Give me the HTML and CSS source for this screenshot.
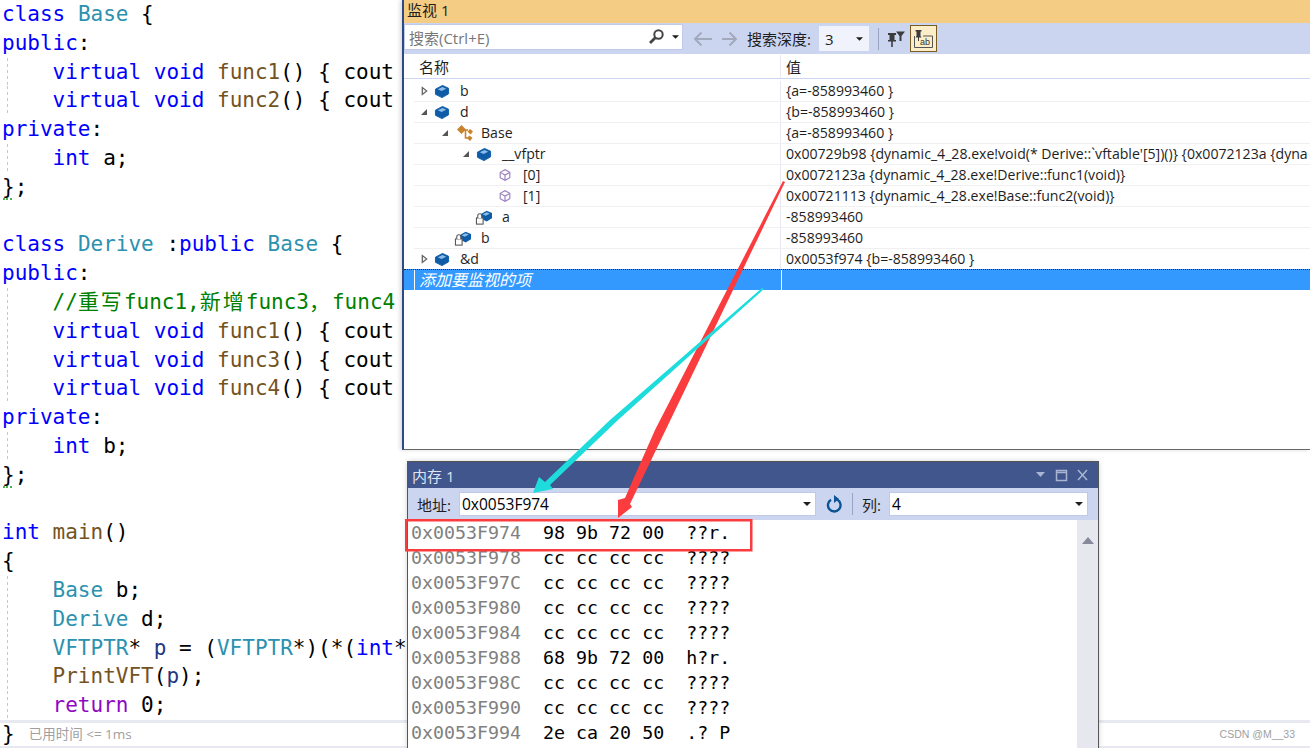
FILE: index.html
```html
<!DOCTYPE html>
<html lang="en">
<head>
  <meta charset="UTF-8" />
  <title>Watch and memory windows</title>
  <link rel="stylesheet" href="styles.css">
</head>
<body>
  <svg class="defs" width="0" height="0">
    <symbol id="cube" viewBox="0 0 16 16">
      <path d="M1 5.500 8.500 1.500 15 4.500v6L8 14.500 1 11z" fill="#0e5ca8" stroke="#0e5ca8" stroke-linejoin="round"/>
      <path d="M3.500 5.600 8.500 3.200l4 1.800-5 2.500z" fill="#8dbce6"/>
    </symbol>
    <symbol id="field" viewBox="0 0 16 16">
      <path d="M2.500 5 8 2l5.500 3v6L8 14l-5.500-3z" fill="none" stroke="#9a7fc0" stroke-width="1.300"/>
      <path d="M2.500 5 8 8l5.500-3M8 8v6" fill="none" stroke="#9a7fc0" stroke-width="1.300"/>
    </symbol>
    <symbol id="locked" viewBox="0 0 20 18">
      <path d="M6 6 13 2l6 2.500v6L13 14l-6-3z" fill="#0e5ca8"/>
      <path d="M8.500 6 13 3.600l3.500 1.500-4.500 2.500z" fill="#8dbce6"/>
      <rect x="1.500" y="10" width="7.500" height="7" fill="#fff" stroke="#555" stroke-width="1.200"/>
      <path d="M3 10V7.500a2.200 2.200 0 0 1 4.500 0V10" fill="#fff" stroke="#555" stroke-width="1.200"/>
    </symbol>
    <symbol id="base" viewBox="0 0 18 18">
      <path d="M1 5.500 5.500 1 10 5.500 5.500 10zM11.500 7.500l2.500-2.500 3 2.500-2.500 3zM11 14l2.500-2.500 3 2.500-2.500 3z" fill="#c9822d"/>
      <path d="M6 6h6M9.500 6.500V14h3" fill="none" stroke="#c9822d" stroke-width="1.600"/>
    </symbol>
    <symbol id="open" viewBox="0 0 8 8"><path d="M7 1v6H1z" fill="#555"/></symbol>
    <symbol id="closed" viewBox="0 0 8 10"><path d="M1.500 1v8L6.500 5z" fill="#fff" stroke="#666" stroke-width="1.500"/></symbol>
    <symbol id="caret" viewBox="0 0 8 4"><path d="M0 0h8L4 4z" fill="#1e1e1e"/></symbol>
  </svg>

  <main class="editor">
    <div class="ln"><b>class</b> <i>Base</i> {</div>
    <div class="ln"><b>public</b>:</div>
    <div class="ln guide">    <b>virtual</b> <b>void</b> <u>func1</u>() { cout</div>
    <div class="ln guide">    <b>virtual</b> <b>void</b> <u>func2</u>() { cout</div>
    <div class="ln"><b>private</b>:</div>
    <div class="ln guide">    <b>int</b> a;</div>
    <div class="ln squiggle">};</div>
    <div class="ln"> </div>
    <div class="ln"><b>class</b> <i>Derive</i> :<b>public</b> <i>Base</i> {</div>
    <div class="ln"><b>public</b>:</div>
    <div class="ln guide">    <em>//<span class="cjk">重写</span>func1,<span class="cjk">新增</span>func3<span class="cjk">，</span>func4</em></div>
    <div class="ln guide">    <b>virtual</b> <b>void</b> <u>func1</u>() { cout</div>
    <div class="ln guide">    <b>virtual</b> <b>void</b> <u>func3</u>() { cout</div>
    <div class="ln guide">    <b>virtual</b> <b>void</b> <u>func4</u>() { cout</div>
    <div class="ln"><b>private</b>:</div>
    <div class="ln guide">    <b>int</b> b;</div>
    <div class="ln squiggle">};</div>
    <div class="ln"> </div>
    <div class="ln"><b>int</b> <u>main</u>()</div>
    <div class="ln">{</div>
    <div class="ln guide">    <i>Base</i> b;</div>
    <div class="ln guide">    <i>Derive</i> d;</div>
    <div class="ln guide">    <i>VFTPTR</i>* <var>p</var> = (<i>VFTPTR</i>*)(*(<b>int</b>*</div>
    <div class="ln guide">    <u>PrintVFT</u>(<var>p</var>);</div>
    <div class="ln guide">    <s>return</s> 0;</div>
    <div class="ln status-row">}<span class="elapsed">已用时间 &lt;= 1ms</span><span class="credit">CSDN @M__33</span></div>
  </main>

  <section class="watch">
    <header class="watch-title">监视 1</header>
    <div class="watch-tools">
      <div class="search">
        <span>搜索(Ctrl+E)</span>
        <svg class="search-icon" width="17" height="16" viewBox="0 0 17 16"><circle cx="10.500" cy="5.500" r="4.200" fill="none" stroke="#444" stroke-width="2"/><path d="M7.500 8.500 2 14" stroke="#444" stroke-width="2.800"/></svg>
        <svg class="caret-s" width="7" height="4"><use href="#caret"/></svg>
      </div>
      <svg class="nav" width="44" height="16" viewBox="0 0 44 16"><path d="M19 8H2M8.500 1.500 2 8l6.500 6.500M29 8h14M36.500 1.500 43 8l-6.500 6.500" fill="none" stroke="#a3a9bd" stroke-width="2"/></svg>
      <span class="depth-label">搜索深度:</span>
      <div class="depth"><span>3</span><svg width="7" height="4"><use href="#caret"/></svg></div>
      <span class="sep"></span>
      <svg class="pin" width="18" height="18" viewBox="0 0 18 18"><path d="M9 1.500h9l-3.500 4.500v5h-2V6z" fill="#3c3c3c"/><path d="M1 3h8v2H7.500v5H9v1.500H1V10h1.500V5H1zM4.200 11.500h1.600V17H4.200z" fill="#3c3c3c"/></svg>
      <div class="ab-toggle"><svg width="21" height="21" viewBox="0 0 21 21"><path d="M2.500 2h6v1.500h-1V8l1 1.500h-6L3.500 8V3.500h-1zM5 9.500h1V13H5z" fill="#3c3c3c"/><path d="M1.500 8v11.500h18V8H10" fill="none" stroke="#555"/><text x="7" y="17" class="ab">ab</text></svg></div>
    </div>
    <div class="grid-head">
      <div class="name-col">名称</div>
      <div class="value-col">值</div>
    </div>
    <div class="rows">
      <div class="row">
        <div class="name-col"><span class="twist"><svg width="7" height="10"><use href="#closed"/></svg></span><svg class="ico" width="15" height="15"><use href="#cube"/></svg><span>b</span></div>
        <div class="value-col">{a=-858993460 }</div>
      </div>
      <div class="row">
        <div class="name-col"><span class="twist"><svg width="8" height="8"><use href="#open"/></svg></span><svg class="ico" width="15" height="15"><use href="#cube"/></svg><span>d</span></div>
        <div class="value-col">{b=-858993460 }</div>
      </div>
      <div class="row d1">
        <div class="name-col"><span class="twist"><svg width="8" height="8"><use href="#open"/></svg></span><svg class="ico ico-base" width="18" height="18"><use href="#base"/></svg><span>Base</span></div>
        <div class="value-col">{a=-858993460 }</div>
      </div>
      <div class="row d2">
        <div class="name-col"><span class="twist"><svg width="8" height="8"><use href="#open"/></svg></span><svg class="ico" width="15" height="15"><use href="#cube"/></svg><span>__vfptr</span></div>
        <div class="value-col">0x00729b98 {dynamic_4_28.exe!void(* Derive::`vftable'[5])()} {0x0072123a {dyna</div>
      </div>
      <div class="row d3">
        <div class="name-col"><span class="twist"></span><svg class="ico" width="14" height="14"><use href="#field"/></svg><span>[0]</span></div>
        <div class="value-col">0x0072123a {dynamic_4_28.exe!Derive::func1(void)}</div>
      </div>
      <div class="row d3">
        <div class="name-col"><span class="twist"></span><svg class="ico" width="14" height="14"><use href="#field"/></svg><span>[1]</span></div>
        <div class="value-col">0x00721113 {dynamic_4_28.exe!Base::func2(void)}</div>
      </div>
      <div class="row d2">
        <div class="name-col"><span class="twist"></span><svg class="ico" width="17" height="16"><use href="#locked"/></svg><span>a</span></div>
        <div class="value-col">-858993460</div>
      </div>
      <div class="row d1">
        <div class="name-col"><span class="twist"></span><svg class="ico" width="17" height="16"><use href="#locked"/></svg><span>b</span></div>
        <div class="value-col">-858993460</div>
      </div>
      <div class="row">
        <div class="name-col"><span class="twist"><svg width="7" height="10"><use href="#closed"/></svg></span><svg class="ico" width="15" height="15"><use href="#cube"/></svg><span>&amp;d</span></div>
        <div class="value-col">0x0053f974 {b=-858993460 }</div>
      </div>
      <div class="row add-row">
        <div class="name-col">添加要监视的项</div>
        <div class="value-col"></div>
      </div>
    </div>
  </section>

  <section class="memory">
    <header class="memory-title">
      <span>内存 1</span>
      <svg width="52" height="14" viewBox="0 0 52 14"><path d="M0 4h9L4.500 9z" fill="#a9b5d3"/><path d="M20.500 2.500h10v10h-10zM20.500 4.500h10" fill="none" stroke="#a9b5d3" stroke-width="1.500"/><path d="M42 2l9 10M51 2l-9 10" stroke="#a9b5d3" stroke-width="1.500"/></svg>
    </header>
    <div class="memory-tools">
      <span class="tool-label">地址:</span>
      <div class="combo addr"><span>0x0053F974</span><svg width="8" height="4"><use href="#caret"/></svg></div>
      <svg class="refresh" width="18" height="20" viewBox="0 0 18 20"><path d="M6 5.800a6.300 6.300 0 1 0 6.500 0" fill="none" stroke="#0b5394" stroke-width="2.400"/><path d="M9 1v8l5-4z" fill="#0b5394"/></svg>
      <span class="sep"></span>
      <span class="tool-label">列:</span>
      <div class="combo cols"><span>4</span><svg width="8" height="4"><use href="#caret"/></svg></div>
    </div>
    <div class="memory-body">
      <div class="dump">
        <div class="dump-line"><span class="addr-text">0x0053F974</span>  98 9b 72 00  ??r.</div>
        <div class="dump-line"><span class="addr-text">0x0053F978</span>  cc cc cc cc  ????</div>
        <div class="dump-line"><span class="addr-text">0x0053F97C</span>  cc cc cc cc  ????</div>
        <div class="dump-line"><span class="addr-text">0x0053F980</span>  cc cc cc cc  ????</div>
        <div class="dump-line"><span class="addr-text">0x0053F984</span>  cc cc cc cc  ????</div>
        <div class="dump-line"><span class="addr-text">0x0053F988</span>  68 9b 72 00  h?r.</div>
        <div class="dump-line"><span class="addr-text">0x0053F98C</span>  cc cc cc cc  ????</div>
        <div class="dump-line"><span class="addr-text">0x0053F990</span>  cc cc cc cc  ????</div>
        <div class="dump-line"><span class="addr-text">0x0053F994</span>  2e ca 20 50  .? P</div>
      </div>
      <div class="scrollbar"><svg width="12" height="7"><path d="M0 7 6 0l6 7z" fill="#868999"/></svg></div>
    </div>
  </section>

  <!-- hand drawn markup on top of the screenshot -->
  <svg class="markup" width="1310" height="748" viewBox="0 0 1310 748">
    <path d="M783 181 655 430 625 498 618 500 618 518 632 507 630 504 785 182z" fill="#fb3c3f"/>
    <path d="M762 288 610 420 545 482 539 477 533 493 553 489 550 485 618 420 764 289z" fill="#1fdcdc"/>
    <rect x="406.250" y="520.250" width="345" height="30" fill="none" stroke="#fb3c3f" stroke-width="2.500"/>
  </svg>
</body>
</html>
```
FILE: styles.css
```css
html, body {
  margin: 0;
  height: 748px;
  overflow: hidden;
  background-color: #fff;
}

.defs {
  position: absolute;
}

/* code editor */
.editor {
  font-family: "DejaVu Sans Mono", "Noto Sans CJK SC", monospace;
  font-size: 21px;
  color: #000;
}

.ln {
  position: relative;
  height: 28.8px;
  line-height: 28.8px;
  padding-left: 2px;
  white-space: pre;
}

.ln b {
  font-weight: normal;
  color: #0000ff;
}

.ln i {
  font-style: normal;
  color: #2b91af;
}

.ln u {
  text-decoration: none;
  color: #74531f;
}

.ln em {
  font-style: normal;
  color: #008000;
}

.ln s {
  text-decoration: none;
  color: #8f08c4;
}

.ln var {
  font-style: normal;
  color: #1f377f;
}

.cjk {
  letter-spacing: 2px;
}

.guide {
  background-image: linear-gradient(#c8c8c8 50%, transparent 50%);
  background-size: 1px 6px;
  background-position: 7px 0;
  background-repeat: repeat-y;
}

.squiggle::after {
  content: "";
  position: absolute;
  left: 3px;
  top: 23px;
  width: 9px;
  height: 2px;
  border-bottom: 2px dotted #4caf50;
}

.status-row {
  display: flex;
  align-items: center;
  height: 23px;
  line-height: 23px;
  border-top: 3px solid #e8e8f0;
  border-bottom: 3px solid #e8e8f0;
}

.elapsed {
  margin-left: 14px;
  font-family: "Open Sans", "Noto Sans CJK SC", sans-serif;
  font-size: 13.500px;
  color: #a0a0a0;
}

.credit {
  margin-left: auto;
  margin-right: 15px;
  font-family: "Liberation Sans", sans-serif;
  font-size: 10.500px;
  color: #a0a0a0;
}

/* watch window */
.watch {
  position: absolute;
  left: 402px;
  top: 0;
  width: 906px;
  height: 449px;
  background-color: #fff;
  border-left: 2px solid #2c4a85;
  border-bottom: 1px solid #666;
  box-shadow: -2px 0 4px rgba(0, 0, 0, 0.15);
  font-family: "Open Sans", "Noto Sans CJK SC", sans-serif;
  font-size: 14.100px;
  color: #1e1e1e;
}

.watch-title {
  height: 23px;
  line-height: 20px;
  padding-left: 3px;
  background-color: #f5cc84;
  font-size: 15px;
}

.watch-tools {
  display: flex;
  align-items: center;
  height: 31px;
  background-color: #ccd5f0;
  font-size: 15px;
}

.search {
  display: flex;
  align-items: center;
  width: 279px;
  height: 26px;
  margin-top: -3px;
  background-color: #fff;
  border: 1px solid #c0cae8;
  box-sizing: border-box;
  color: #777;
  padding-left: 4px;
}

.search span {
  flex: 1;
}

.search-icon {
  margin-right: 7px;
}

.caret-s {
  margin-right: 3px;
}

.nav {
  margin-left: 10px;
}

.depth-label {
  margin-left: 10px;
}

.depth {
  display: flex;
  align-items: center;
  justify-content: space-between;
  width: 50px;
  height: 25px;
  margin-left: 8px;
  padding: 0 6px;
  box-sizing: border-box;
  background-color: #f0f3fb;
}

.sep {
  width: 1px;
  height: 22px;
  margin: 0 8px 0 9px;
  background-color: #9aa5c4;
}

.ab-toggle {
  display: flex;
  align-items: center;
  justify-content: center;
  width: 27px;
  height: 27px;
  margin-left: 5px;
  box-sizing: border-box;
  background-color: #fdeeca;
  border: 1px solid #7a5c22;
}

.ab {
  font-family: "Liberation Sans", sans-serif;
  font-size: 9px;
  fill: #333;
}

.grid-head,
.row {
  display: flex;
  margin-left: 10px;
}

.grid-head {
  height: 25px;
  line-height: 25px;
  margin-left: 0;
  padding-left: 10px;
  border-bottom: 1px solid #ccd5f0;
  border-top: 1px solid #fff;
  box-sizing: border-box;
  font-size: 15px;
}

.rows {
  padding-top: 2px;
}

.name-col {
  width: 366px;
  padding-left: 5px;
  box-sizing: border-box;
  flex: none;
}

.value-col {
  flex: 1;
  padding-left: 5px;
  border-left: 1px solid #e8e8f0;
  white-space: nowrap;
  overflow: hidden;
}

.row {
  height: 21px;
  line-height: 20px;
  box-sizing: border-box;
  border-bottom: 1px solid #f0f0f0;
}

.row .name-col {
  display: flex;
  align-items: center;
  padding-left: 2px;
}

.row.d1 .name-col {
  padding-left: 23px;
}

.row.d2 .name-col {
  padding-left: 44px;
}

.row.d3 .name-col {
  padding-left: 65px;
}

.twist {
  display: flex;
  align-items: center;
  justify-content: center;
  width: 16px;
  flex: none;
}

.ico {
  width: 20px;
  margin-right: 8px;
  flex: none;
}

.ico-base {
  margin-left: 2px;
  margin-right: 6px;
}

.add-row {
  height: 21px;
  margin-top: -1px;
  margin-left: 0;
  padding-left: 10px;
  background-color: #3399ff;
  color: #fff;
  font-size: 16px;
  font-style: italic;
  border-bottom: none;
  border-top: 1px dotted #222;
}

.add-row .name-col {
  padding-left: 4px;
  border-left: 1px solid #fff;
  width: 367px;
}

.add-row .value-col {
  border-left: 1px solid #fff;
}

/* memory window */
.memory {
  position: absolute;
  left: 408px;
  top: 462px;
  width: 690px;
  height: 286px;
  background-color: #fff;
  box-shadow: 0 0 0 1px #555, 0 0 6px rgba(0, 0, 0, 0.25);
  font-family: "Open Sans", "Noto Sans CJK SC", sans-serif;
  font-size: 15px;
  color: #1e1e1e;
}

.memory-title {
  display: flex;
  align-items: center;
  justify-content: space-between;
  height: 26px;
  padding: 0 10px 0 4px;
  background-color: #40568d;
  color: #dfe4f2;
}

.memory-tools {
  display: flex;
  align-items: center;
  height: 32px;
  padding-left: 9px;
  background-color: #ccd5f0;
}

.tool-label {
  margin-right: 8px;
}

.combo {
  display: flex;
  align-items: center;
  justify-content: space-between;
  height: 24px;
  padding: 0 4px 0 2px;
  box-sizing: border-box;
  background-color: #fff;
  border: 1px solid #c0cae8;
  font-size: 15.500px;
  color: #000;
}

.addr {
  width: 357px;
}

.cols {
  width: 199px;
}

.refresh {
  margin-left: 9px;
}

.memory-tools .sep {
  margin: 0 9px;
}

.memory-body {
  display: flex;
  height: 228px;
}

.dump {
  flex: 1;
  padding-left: 3px;
  font-family: "DejaVu Sans Mono", monospace;
  font-size: 18.300px;
  color: #000;
}

.dump-line {
  height: 25px;
  line-height: 25px;
  white-space: pre;
}

.addr-text {
  color: #808080;
}

.scrollbar {
  width: 21px;
  padding-top: 8px;
  text-align: center;
  background-color: #e6e7ef;
}

.markup {
  position: absolute;
  left: 0;
  top: 0;
  pointer-events: none;
}
```
